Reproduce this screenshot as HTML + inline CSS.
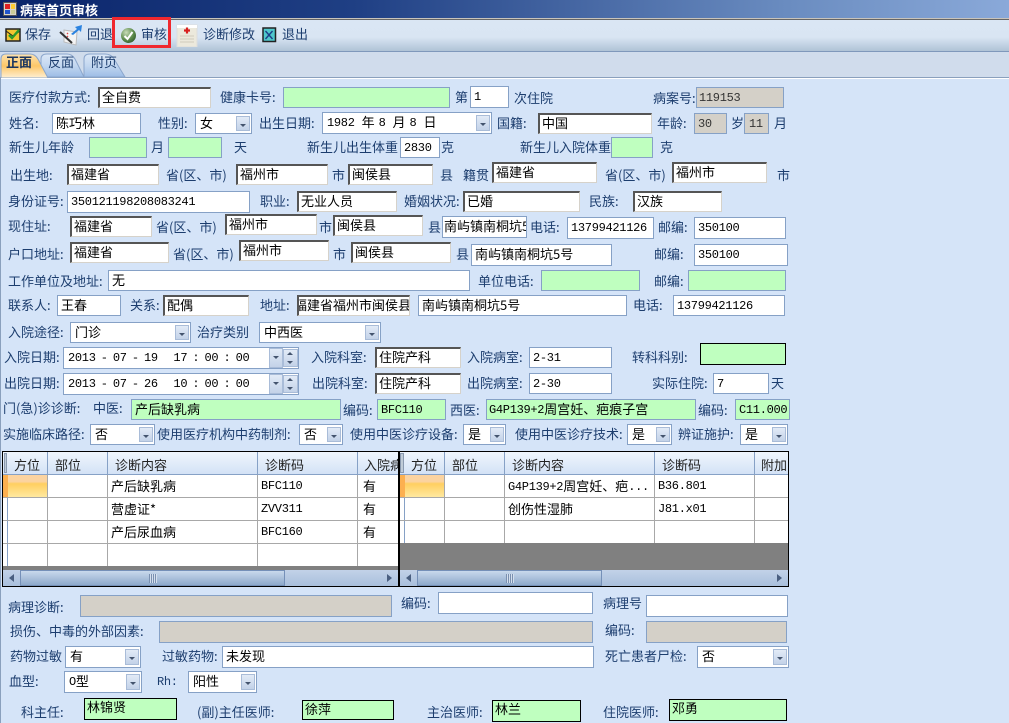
<!DOCTYPE html>
<html><head><meta charset="utf-8"><style>
*{box-sizing:border-box}
html,body{margin:0;padding:0}
body{width:1009px;height:723px;overflow:hidden;position:relative;background:#d5e4f8;font:13px/14px "WenQuanYi Zen Hei","Noto Sans CJK SC",sans-serif;color:#1c3d6e}
div,span.l,svg.i{position:absolute}
.l{white-space:pre;height:14px}
.m{font-family:"Liberation Mono",monospace;font-size:12px;letter-spacing:-.3px;position:relative;top:-1px}
div.cell.m{position:absolute;top:auto}
.b,.s,.g,.k,.a,.c{color:#000;white-space:pre;overflow:hidden;padding:1px 0 0 3px;line-height:15px}
.b{background:#fff;border:1px solid #86a1c6}
.g{background:#bfffbf;border:1px solid #86a1c6}
.k{background:#d4d0c8;border:1px solid #86a1c6;color:#333}
.s{background:#fff;border:1px solid #d6d2ca;border-top:2px solid #555;border-left:2px solid #555;padding:0 0 0 2px}
.a{background:#bfffbf;border:1px solid #000;padding:0 0 0 2px}
.c{background:#fff;border:1px solid #86a1c6;padding:1px 0 0 4px}
.c i{position:absolute;right:1px;top:2px;bottom:2px;width:14px;background:linear-gradient(#e2ebf7,#c3d2e8);border:1px solid #a9bcd8}
.c i:after{content:"";position:absolute;left:3px;top:7px;border:3px solid transparent;border-top:3px solid #44546e;border-bottom:0}
.t{color:#1c3d6e;white-space:pre;height:14px}
.hd{top:452px;height:22px;background:linear-gradient(#f0f6fd,#d3e2f6);color:#222;white-space:pre;overflow:hidden}
.v{top:452px;width:1px;background:#a8a8a8}
.vh{top:452px;width:1px;height:22px;background:#86a1c6}
.h{height:1px;background:#a8a8a8}
.cell{color:#000;white-space:pre;height:15px}
.sb{top:570px;height:16px;background:linear-gradient(#c2d2e8,#a9bfdc)}
.th{top:570px;height:16px;background:linear-gradient(#c9d9ec,#8ea9cb);border:1px solid #7590b8}
.dt{word-spacing:-1.7px;left:1px}
</style></head><body>

<div style="left:0;top:0;width:1009px;height:18px;background:linear-gradient(90deg,#0a246a 0,#1f3f84 35%,#6a8cc0 78%,#8aa9d9 100%)"></div>
<div style="left:0;top:18px;width:1009px;height:1px;background:#c8c4bc"></div>
<div style="left:0;top:19px;width:1009px;height:1px;background:#666"></div>
<svg class="i" style="left:3px;top:2px" width="14" height="14" viewBox="0 0 14 14"><rect x=".5" y=".5" width="13" height="13" fill="#d8d4cc" stroke="#555"/><rect x="2" y="2" width="5" height="5" fill="#d22"/><rect x="8" y="2" width="4" height="5" fill="#fc3"/><rect x="2" y="8" width="5" height="4" fill="#25c"/><rect x="8" y="8" width="4" height="4" fill="#cc9"/></svg>
<div style="left:20px;top:3px;color:#fff;font-weight:bold;font-size:13px;white-space:pre">病案首页审核</div>

<div style="left:0;top:20px;width:1009px;height:31px;background:linear-gradient(#dae6f4 0,#d9e5f3 55%,#afc3d6 100%)"></div>
<div style="left:0;top:51px;width:1009px;height:1px;background:#7f98bb"></div>
<div style="left:0;top:52px;width:1009px;height:25px;background:#d0dcec"></div>
<div style="left:0;top:77px;width:1009px;height:1px;background:#8aa0bd"></div>
<div style="left:0;top:78px;width:1009px;height:1px;background:#fff"></div>
<div style="left:0;top:78px;width:1px;height:645px;background:#8aa0bd"></div>

<svg class="i" style="left:5px;top:27px" width="17" height="16" viewBox="0 0 17 16"><rect x="1" y="2" width="14" height="12" fill="#f2c530" stroke="#222" stroke-width="1.5"/><path d="M1 4l7 5 7-5" fill="none" stroke="#222"/><path d="M4 8l3 3 7-8" fill="none" stroke="#2a9a2a" stroke-width="2.4"/></svg>
<div class="t" style="left:25px;top:27px">保存</div>
<svg class="i" style="left:59px;top:24px" width="24" height="24" viewBox="0 0 24 24"><path d="M5 6l13 2-1 13-12-3z" fill="#f4f4f4" stroke="#bbb"/><path d="M8 9l1 1M8 12l1 1" stroke="#d44" stroke-width="1.3"/><path d="M1 8l12 11" stroke="#333" stroke-width="2"/><path d="M12 10l6-5-2-2 7-2-1 7-2-2-6 5z" fill="#2b83e0"/></svg>
<div class="t" style="left:87px;top:27px">回退</div>
<svg class="i" style="left:120px;top:27px" width="17" height="17" viewBox="0 0 17 17"><defs><radialGradient id="gb" cx=".35" cy=".3" r=".8"><stop offset="0" stop-color="#c9dcb9"/><stop offset=".6" stop-color="#5d8c4d"/><stop offset="1" stop-color="#2f5a2a"/></radialGradient></defs><circle cx="8.5" cy="8.5" r="7.5" fill="url(#gb)"/><path d="M4.5 9l3 3 5-7" fill="none" stroke="#fff" stroke-width="2"/></svg>
<div class="t" style="left:141px;top:27px">审核</div>
<div style="left:112px;top:17px;width:59px;height:31px;border:3px solid #f0282e"></div>
<svg class="i" style="left:176px;top:24px" width="22" height="23" viewBox="0 0 22 23"><rect x="1" y="1" width="20" height="22" fill="#ece9dc" stroke="#ddd"/><rect x="1" y="1" width="20" height="3" fill="#fff"/><path d="M4 12h14M4 15h14M4 18h14" stroke="#d0ccbc"/><path d="M11 3.5v6M8 6.5h6" stroke="#d81e1e" stroke-width="2.2"/></svg>
<div class="t" style="left:203px;top:27px">诊断修改</div>
<svg class="i" style="left:262px;top:27px" width="15" height="16" viewBox="0 0 15 16"><rect x="1" y="1" width="12.5" height="13.5" fill="#4fc8cc" stroke="#222" stroke-width="1.5"/><path d="M3.5 4l7 8M10.5 4l-7 8" stroke="#1d3f88" stroke-width="1.4"/></svg>
<div class="t" style="left:282px;top:27px">退出</div>

<svg class="i" style="left:0;top:53px" width="136" height="25" viewBox="0 0 136 25">
<defs><linearGradient id="tb" x1="0" y1="0" x2="0" y2="1"><stop offset="0" stop-color="#dce8f7"/><stop offset=".5" stop-color="#c3d7f0"/><stop offset="1" stop-color="#9dbde6"/></linearGradient>
<linearGradient id="to" x1="0" y1="0" x2="0" y2="1"><stop offset="0" stop-color="#fde2b0"/><stop offset=".5" stop-color="#fcc768"/><stop offset="1" stop-color="#fff0d4"/></linearGradient></defs>
<path d="M84 24V6q0-5 6-5h15q6 0 9 5l11 18z" fill="url(#tb)" stroke="#8ba6cc"/>
<path d="M41 24V6q0-5 6-5h20q5 0 8 5l9 18z" fill="url(#tb)" stroke="#8ba6cc"/>
<path d="M1 25V6q0-5 5-5h24q5 0 8 5l10 19z" fill="url(#to)" stroke="#8ba6cc"/></svg>
<div style="left:6px;top:55px;color:#1b3660;font-weight:bold">正面</div>
<div class="t" style="left:48px;top:55px">反面</div>
<div class="t" style="left:91px;top:55px">附页</div>

<!-- row 1 -->
<div class="l" style="left:9px;top:90px">医疗付款方式:</div>
<div class="s" style="left:98px;top:87px;width:113px;height:21px">全自费</div>
<div class="l" style="left:220px;top:90px">健康卡号:</div>
<div class="g" style="left:283px;top:87px;width:167px;height:21px"></div>
<div class="l" style="left:455px;top:90px">第</div>
<div class="b" style="left:470px;top:86px;width:39px;height:22px"><span class="m">1</span></div>
<div class="l" style="left:514px;top:91px">次住院</div>
<div class="l" style="left:653px;top:91px">病案号:</div>
<div class="k" style="left:696px;top:87px;width:88px;height:21px;padding-left:2px"><span class="m">119153</span></div>
<!-- row 2 -->
<div class="l" style="left:9px;top:116px">姓名:</div>
<div class="b" style="left:52px;top:113px;width:89px;height:21px">陈巧林</div>
<div class="l" style="left:158px;top:116px">性别:</div>
<div class="c" style="left:195px;top:113px;width:57px;height:21px">女<i></i></div>
<div class="l" style="left:259px;top:116px">出生日期:</div>
<div class="c" style="left:322px;top:112px;width:170px;height:22px"><span class="m">1982</span><span style="margin-left:7px">年</span><span class="m" style="margin-left:4px">8</span><span style="margin-left:7px">月</span><span class="m" style="margin-left:4px">8</span><span style="margin-left:7px">日</span><i></i></div>
<div class="l" style="left:497px;top:116px">国籍:</div>
<div class="s" style="left:538px;top:113px;width:114px;height:21px">中国</div>
<div class="l" style="left:657px;top:116px">年龄:</div>
<div class="k" style="left:694px;top:113px;width:33px;height:21px"><span class="m">30</span></div>
<div class="l" style="left:731px;top:116px">岁</div>
<div class="k" style="left:744px;top:113px;width:25px;height:21px;padding-left:4px"><span class="m">11</span></div>
<div class="l" style="left:774px;top:116px">月</div>
<!-- row 3 -->
<div class="l" style="left:9px;top:140px">新生儿年龄</div>
<div class="g" style="left:89px;top:137px;width:58px;height:21px"></div>
<div class="l" style="left:151px;top:140px">月</div>
<div class="g" style="left:168px;top:137px;width:54px;height:21px"></div>
<div class="l" style="left:234px;top:140px">天</div>
<div class="l" style="left:307px;top:140px">新生儿出生体重</div>
<div class="b" style="left:400px;top:137px;width:40px;height:21px"><span class="m">2830</span></div>
<div class="l" style="left:441px;top:140px">克</div>
<div class="l" style="left:520px;top:140px">新生儿入院体重</div>
<div class="g" style="left:611px;top:137px;width:42px;height:21px"></div>
<div class="l" style="left:660px;top:140px">克</div>
<!-- row 4 -->
<div class="l" style="left:10px;top:168px">出生地:</div>
<div class="s" style="left:67px;top:164px;width:92px;height:21px">福建省</div>
<div class="l" style="left:166px;top:168px">省(区、市)</div>
<div class="s" style="left:236px;top:164px;width:92px;height:21px">福州市</div>
<div class="l" style="left:332px;top:168px">市</div>
<div class="s" style="left:348px;top:164px;width:85px;height:21px">闽侯县</div>
<div class="l" style="left:440px;top:168px">县</div>
<div class="l" style="left:463px;top:168px">籍贯</div>
<div class="s" style="left:492px;top:162px;width:105px;height:21px">福建省</div>
<div class="l" style="left:605px;top:168px">省(区、市)</div>
<div class="s" style="left:672px;top:162px;width:95px;height:21px">福州市</div>
<div class="l" style="left:777px;top:168px">市</div>
<!-- row 5 -->
<div class="l" style="left:8px;top:194px">身份证号:</div>
<div class="b" style="left:67px;top:191px;width:183px;height:22px"><span class="m">350121198208083241</span></div>
<div class="l" style="left:260px;top:194px">职业:</div>
<div class="s" style="left:297px;top:191px;width:100px;height:21px">无业人员</div>
<div class="l" style="left:404px;top:194px">婚姻状况:</div>
<div class="s" style="left:463px;top:191px;width:117px;height:21px">已婚</div>
<div class="l" style="left:589px;top:194px">民族:</div>
<div class="s" style="left:633px;top:191px;width:89px;height:21px">汉族</div>
<!-- row 6 -->
<div class="l" style="left:8px;top:219px">现住址:</div>
<div class="s" style="left:70px;top:216px;width:82px;height:21px">福建省</div>
<div class="l" style="left:156px;top:220px">省(区、市)</div>
<div class="s" style="left:225px;top:214px;width:92px;height:21px">福州市</div>
<div class="l" style="left:319px;top:220px">市</div>
<div class="s" style="left:333px;top:215px;width:90px;height:21px">闽侯县</div>
<div class="l" style="left:428px;top:220px">县</div>
<div class="b" style="left:442px;top:216px;width:85px;height:22px;padding-left:1px">南屿镇南桐坑5号</div>
<div class="l" style="left:530px;top:220px">电话:</div>
<div class="b" style="left:567px;top:217px;width:87px;height:22px"><span class="m">13799421126</span></div>
<div class="l" style="left:658px;top:220px">邮编:</div>
<div class="b" style="left:694px;top:217px;width:92px;height:22px"><span class="m">350100</span></div>
<!-- row 7 -->
<div class="l" style="left:8px;top:247px">户口地址:</div>
<div class="s" style="left:70px;top:242px;width:99px;height:21px">福建省</div>
<div class="l" style="left:173px;top:247px">省(区、市)</div>
<div class="s" style="left:239px;top:240px;width:90px;height:21px">福州市</div>
<div class="l" style="left:333px;top:247px">市</div>
<div class="s" style="left:351px;top:242px;width:100px;height:21px">闽侯县</div>
<div class="l" style="left:456px;top:247px">县</div>
<div class="b" style="left:471px;top:244px;width:141px;height:22px">南屿镇南桐坑5号</div>
<div class="l" style="left:654px;top:247px">邮编:</div>
<div class="b" style="left:694px;top:244px;width:94px;height:22px"><span class="m">350100</span></div>
<!-- row 8 -->
<div class="l" style="left:8px;top:274px">工作单位及地址:</div>
<div class="b" style="left:108px;top:270px;width:362px;height:21px">无</div>
<div class="l" style="left:478px;top:274px">单位电话:</div>
<div class="g" style="left:541px;top:270px;width:99px;height:21px"></div>
<div class="l" style="left:654px;top:274px">邮编:</div>
<div class="g" style="left:688px;top:270px;width:98px;height:21px"></div>
<!-- row 9 -->
<div class="l" style="left:8px;top:298px">联系人:</div>
<div class="b" style="left:57px;top:295px;width:64px;height:21px">王春</div>
<div class="l" style="left:130px;top:298px">关系:</div>
<div class="s" style="left:163px;top:295px;width:86px;height:21px">配偶</div>
<div class="l" style="left:260px;top:298px">地址:</div>
<div class="s" style="left:297px;top:295px;width:113px;height:21px;padding-left:0"><span style="position:relative;left:-5px">福建省福州市闽侯县</span></div>
<div class="b" style="left:418px;top:295px;width:209px;height:21px">南屿镇南桐坑5号</div>
<div class="l" style="left:633px;top:298px">电话:</div>
<div class="b" style="left:673px;top:295px;width:112px;height:21px"><span class="m">13799421126</span></div>
<!-- row 10 -->
<div class="l" style="left:8px;top:325px">入院途径:</div>
<div class="c" style="left:70px;top:322px;width:121px;height:21px">门诊<i></i></div>
<div class="l" style="left:197px;top:325px">治疗类别</div>
<div class="c" style="left:259px;top:322px;width:122px;height:21px">中西医<i></i></div>
<!-- row 11 -->
<div class="l" style="left:4px;top:350px">入院日期:</div>
<div class="b" style="left:63px;top:347px;width:236px;height:22px"><span class="m dt">2013 - 07 - 19   17 : 00 : 00</span></div>
<div class="c" style="left:267px;top:348px;width:16px;height:20px;border:0;padding:0;background:none"><i style="right:0;top:0;bottom:0"></i></div>
<div style="left:283px;top:349px;width:15px;height:18px;background:linear-gradient(#e2ebf7,#c3d2e8);border:1px solid #a9bcd8"></div>
<div style="left:287px;top:352px;border:3px solid transparent;border-bottom:3px solid #44546e;border-top:0"></div>
<div style="left:287px;top:361px;border:3px solid transparent;border-top:3px solid #44546e;border-bottom:0"></div>
<div class="l" style="left:311px;top:350px">入院科室:</div>
<div class="s" style="left:375px;top:347px;width:86px;height:21px">住院产科</div>
<div class="l" style="left:467px;top:350px">入院病室:</div>
<div class="b" style="left:529px;top:347px;width:83px;height:21px"><span class="m">2-31</span></div>
<div class="l" style="left:632px;top:350px">转科科别:</div>
<div style="left:700px;top:343px;width:86px;height:22px;background:#bfffbf;border:1px solid #000"></div>
<!-- row 12 -->
<div class="l" style="left:4px;top:376px">出院日期:</div>
<div class="b" style="left:63px;top:373px;width:236px;height:22px"><span class="m dt">2013 - 07 - 26   10 : 00 : 00</span></div>
<div class="c" style="left:267px;top:374px;width:16px;height:20px;border:0;padding:0;background:none"><i style="right:0;top:0;bottom:0"></i></div>
<div style="left:283px;top:375px;width:15px;height:18px;background:linear-gradient(#e2ebf7,#c3d2e8);border:1px solid #a9bcd8"></div>
<div style="left:287px;top:378px;border:3px solid transparent;border-bottom:3px solid #44546e;border-top:0"></div>
<div style="left:287px;top:387px;border:3px solid transparent;border-top:3px solid #44546e;border-bottom:0"></div>
<div class="l" style="left:312px;top:376px">出院科室:</div>
<div class="s" style="left:375px;top:373px;width:86px;height:21px">住院产科</div>
<div class="l" style="left:467px;top:376px">出院病室:</div>
<div class="b" style="left:529px;top:373px;width:83px;height:21px"><span class="m">2-30</span></div>
<div class="l" style="left:652px;top:376px">实际住院:</div>
<div class="b" style="left:713px;top:373px;width:56px;height:21px"><span class="m">7</span></div>
<div class="l" style="left:771px;top:376px">天</div>
<!-- row 13 -->
<div class="l" style="left:3px;top:401px">门(急)诊诊断:</div>
<div class="l" style="left:93px;top:401px">中医:</div>
<div class="g" style="left:131px;top:399px;width:210px;height:21px">产后缺乳病</div>
<div class="l" style="left:343px;top:403px">编码:</div>
<div class="g" style="left:377px;top:399px;width:69px;height:21px"><span class="m">BFC110</span></div>
<div class="l" style="left:450px;top:403px">西医:</div>
<div class="g" style="left:486px;top:399px;width:210px;height:21px;padding-left:2px"><span class="m">G4P139+2</span>周宫妊、疤痕子宫</div>
<div class="l" style="left:698px;top:403px">编码:</div>
<div class="g" style="left:735px;top:399px;width:55px;height:21px"><span class="m">C11.000</span></div>
<!-- row 14 -->
<div class="l" style="left:3px;top:427px">实施临床路径:</div>
<div class="c" style="left:90px;top:424px;width:65px;height:21px">否<i></i></div>
<div class="l" style="left:157px;top:427px">使用医疗机构中药制剂:</div>
<div class="c" style="left:299px;top:424px;width:44px;height:21px">否<i></i></div>
<div class="l" style="left:350px;top:427px">使用中医诊疗设备:</div>
<div class="c" style="left:463px;top:424px;width:43px;height:21px">是<i></i></div>
<div class="l" style="left:515px;top:427px">使用中医诊疗技术:</div>
<div class="c" style="left:627px;top:424px;width:45px;height:21px">是<i></i></div>
<div class="l" style="left:678px;top:427px">辨证施护:</div>
<div class="c" style="left:740px;top:424px;width:48px;height:21px">是<i></i></div>

<!-- left grid -->
<div style="left:3px;top:452px;width:396px;height:118px;background:#fff"></div>
<div class="hd" style="left:3px;width:396px"></div>
<div style="left:3px;top:475px;width:5px;height:22px;background:#fcb050"></div>
<div style="left:8px;top:475px;width:39px;height:22px;background:linear-gradient(#fbd3a0 0,#fbd3a0 30%,#ffcf60 40%,#ffe9a0 100%)"></div>
<div style="left:3px;top:497px;width:5px;height:70px;background:#fff;border-right:1px solid #86a1c6"></div>
<div style="left:4px;top:453px;width:3px;height:20px;background:#c0ccd8;border:1px solid #8a9ab0"></div>
<div class="vh" style="left:47px"></div><div class="vh" style="left:107px"></div><div class="vh" style="left:257px"></div><div class="vh" style="left:357px"></div>
<div class="t" style="left:14px;top:458px;color:#222">方位</div>
<div class="t" style="left:55px;top:458px;color:#222">部位</div>
<div class="t" style="left:115px;top:458px;color:#222">诊断内容</div>
<div class="t" style="left:265px;top:458px;color:#222">诊断码</div>
<div class="t" style="left:364px;top:458px;width:35px;overflow:hidden;color:#222">入院病</div>
<div class="h" style="left:3px;top:474px;width:396px;background:#86a1c6"></div>
<div class="h" style="left:3px;top:497px;width:396px"></div>
<div class="h" style="left:3px;top:520px;width:396px"></div>
<div class="h" style="left:3px;top:543px;width:396px"></div>
<div style="left:3px;top:566px;width:396px;height:4px;background:#808080"></div>
<div class="v" style="left:47px;top:475px;height:91px"></div><div class="v" style="left:107px;top:475px;height:91px"></div><div class="v" style="left:257px;top:475px;height:91px"></div><div class="v" style="left:357px;top:475px;height:91px"></div>
<div class="cell" style="left:111px;top:479px">产后缺乳病</div>
<div class="cell m" style="left:261px;top:479px">BFC110</div>
<div class="cell" style="left:363px;top:479px">有</div>
<div class="cell" style="left:111px;top:502px">营虚证*</div>
<div class="cell m" style="left:261px;top:502px">ZVV311</div>
<div class="cell" style="left:363px;top:502px">有</div>
<div class="cell" style="left:111px;top:525px">产后尿血病</div>
<div class="cell m" style="left:261px;top:525px">BFC160</div>
<div class="cell" style="left:363px;top:525px">有</div>
<div class="sb" style="left:3px;width:396px"></div>
<div class="th" style="left:20px;width:265px"></div>
<div style="left:149px;top:574px;width:8px;height:9px;background:repeating-linear-gradient(90deg,#7a90b0 0,#7a90b0 1px,#d5e0ee 1px,#d5e0ee 2px)"></div>
<div style="left:9px;top:574px;border:4px solid transparent;border-right:5px solid #4a5f80;border-left:0"></div>
<div style="left:387px;top:574px;border:4px solid transparent;border-left:5px solid #4a5f80;border-right:0"></div>

<!-- right grid -->
<div style="left:400px;top:452px;width:388px;height:118px;background:#fff"></div>
<div class="hd" style="left:400px;width:388px"></div>
<div style="left:400px;top:475px;width:5px;height:22px;background:#fcb050"></div>
<div style="left:405px;top:475px;width:39px;height:22px;background:linear-gradient(#fbd3a0 0,#fbd3a0 30%,#ffcf60 40%,#ffe9a0 100%)"></div>
<div style="left:400px;top:497px;width:5px;height:46px;background:#fff;border-right:1px solid #86a1c6"></div>
<div style="left:400px;top:453px;width:4px;height:20px;background:#c0ccd8;border:1px solid #8a9ab0"></div>
<div class="vh" style="left:444px"></div><div class="vh" style="left:504px"></div><div class="vh" style="left:654px"></div><div class="vh" style="left:754px"></div>
<div class="t" style="left:411px;top:458px;color:#222">方位</div>
<div class="t" style="left:452px;top:458px;color:#222">部位</div>
<div class="t" style="left:512px;top:458px;color:#222">诊断内容</div>
<div class="t" style="left:662px;top:458px;color:#222">诊断码</div>
<div class="t" style="left:761px;top:458px;width:27px;overflow:hidden;color:#222">附加</div>
<div class="h" style="left:400px;top:474px;width:388px;background:#86a1c6"></div>
<div class="h" style="left:400px;top:497px;width:388px"></div>
<div class="h" style="left:400px;top:520px;width:388px"></div>
<div class="v" style="left:444px;top:475px;height:68px"></div><div class="v" style="left:504px;top:475px;height:68px"></div><div class="v" style="left:654px;top:475px;height:68px"></div><div class="v" style="left:754px;top:475px;height:68px"></div>
<div style="left:400px;top:543px;width:388px;height:27px;background:#808080"></div>
<div class="cell" style="left:508px;top:479px"><span class="m">G4P139+2</span>周宫妊、疤<span class="m">...</span></div>
<div class="cell m" style="left:658px;top:479px">B36.801</div>
<div class="cell" style="left:508px;top:502px">创伤性湿肺</div>
<div class="cell m" style="left:658px;top:502px">J81.x01</div>
<div class="sb" style="left:400px;width:388px"></div>
<div class="th" style="left:417px;width:185px"></div>
<div style="left:506px;top:574px;width:8px;height:9px;background:repeating-linear-gradient(90deg,#7a90b0 0,#7a90b0 1px,#d5e0ee 1px,#d5e0ee 2px)"></div>
<div style="left:406px;top:574px;border:4px solid transparent;border-right:5px solid #4a5f80;border-left:0"></div>
<div style="left:777px;top:574px;border:4px solid transparent;border-left:5px solid #4a5f80;border-right:0"></div>

<!-- grid borders -->
<div style="left:2px;top:451px;width:397px;height:136px;border:1px solid #000;border-right:0"></div>
<div style="left:398px;top:451px;width:391px;height:136px;border:1px solid #000;border-left:2px solid #000"></div>

<!-- bottom -->
<div class="l" style="left:8px;top:600px">病理诊断:</div>
<div class="k" style="left:80px;top:595px;width:312px;height:22px"></div>
<div class="l" style="left:401px;top:596px">编码:</div>
<div class="b" style="left:438px;top:592px;width:155px;height:22px"></div>
<div class="l" style="left:603px;top:596px">病理号</div>
<div class="b" style="left:646px;top:595px;width:142px;height:22px"></div>
<div class="l" style="left:10px;top:624px">损伤、中毒的外部因素:</div>
<div class="k" style="left:159px;top:621px;width:434px;height:22px"></div>
<div class="l" style="left:605px;top:623px">编码:</div>
<div class="k" style="left:646px;top:621px;width:141px;height:22px"></div>
<div class="l" style="left:10px;top:649px">药物过敏</div>
<div class="c" style="left:65px;top:646px;width:76px;height:22px">有<i></i></div>
<div class="l" style="left:162px;top:649px">过敏药物:</div>
<div class="b" style="left:222px;top:646px;width:372px;height:22px">未发现</div>
<div class="l" style="left:605px;top:649px">死亡患者尸检:</div>
<div class="c" style="left:697px;top:646px;width:92px;height:22px">否<i></i></div>
<div class="l" style="left:9px;top:674px">血型:</div>
<div class="c" style="left:64px;top:671px;width:78px;height:22px"><span class="m">O</span>型<i></i></div>
<div class="l" style="left:157px;top:674px"><span class="m">Rh:</span></div>
<div class="c" style="left:188px;top:671px;width:69px;height:22px">阳性<i></i></div>
<div class="l" style="left:21px;top:705px">科主任:</div>
<div class="a" style="left:84px;top:698px;width:93px;height:22px">林锦贤</div>
<div class="l" style="left:197px;top:705px">(副)主任医师:</div>
<div class="a" style="left:302px;top:700px;width:92px;height:20px">徐萍</div>
<div class="l" style="left:427px;top:705px">主治医师:</div>
<div class="a" style="left:492px;top:700px;width:89px;height:22px">林兰</div>
<div class="l" style="left:603px;top:705px">住院医师:</div>
<div class="a" style="left:669px;top:699px;width:118px;height:22px">邓勇</div>
</body></html>
